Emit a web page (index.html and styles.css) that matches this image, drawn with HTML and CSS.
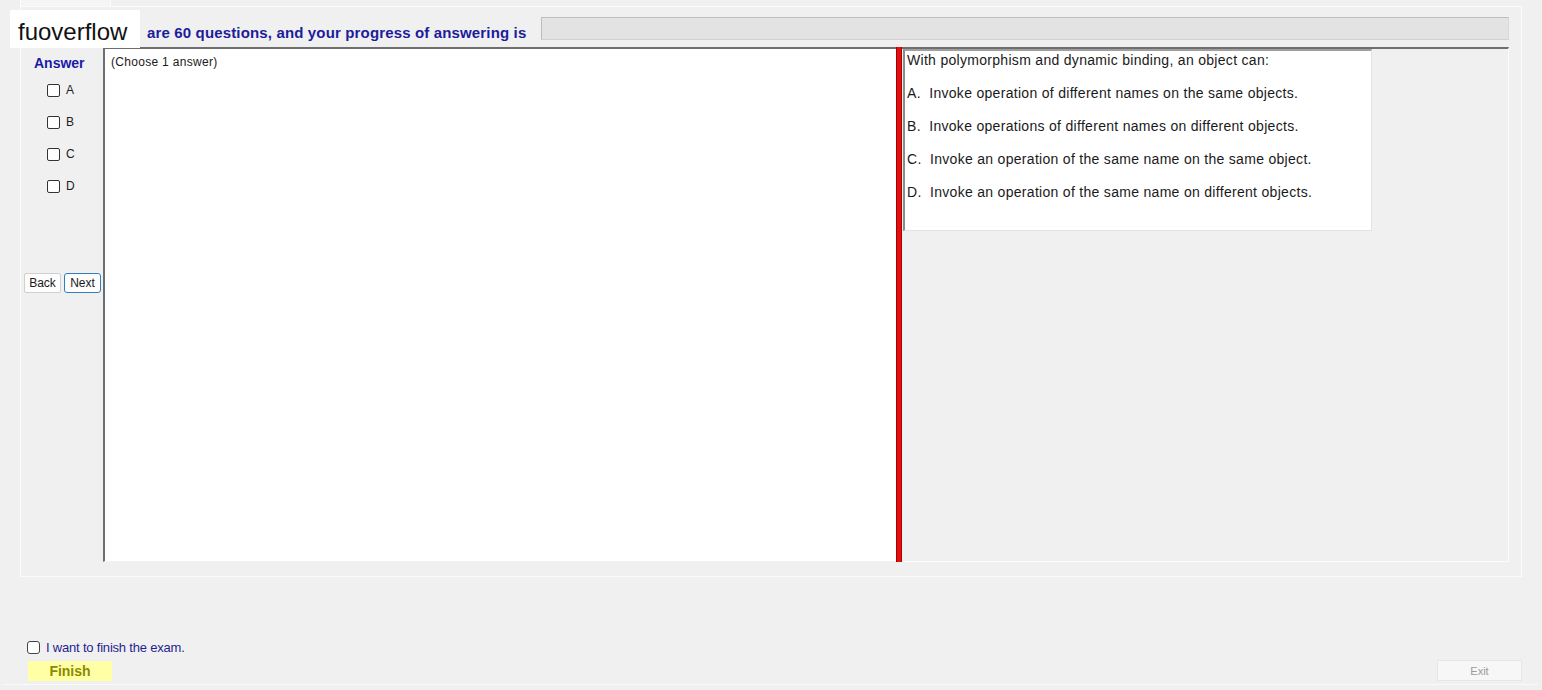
FILE: index.html
```html
<!DOCTYPE html>
<html lang="en">
<head>
  <meta charset="UTF-8" />
  <title>Exam</title>
  <link rel="stylesheet" href="styles.css">
</head>
<body>
<div class="window">
  <div class="tab"></div>

  <div class="panel">
    <div class="header">
      <span class="header-text">are 60 questions, and your progress of answering is</span>
      <div class="progress"></div>
    </div>

    <div class="main">
      <div class="answer-col">
        <div class="answer-title">Answer</div>
        <div class="opt"><span class="box"></span>A</div>
        <div class="opt"><span class="box"></span>B</div>
        <div class="opt"><span class="box"></span>C</div>
        <div class="opt"><span class="box"></span>D</div>
        <div class="nav">
          <button class="btn">Back</button>
          <button class="btn btn-next">Next</button>
        </div>
      </div>

      <div class="question-box">(Choose 1 answer)</div>
      <div class="splitter"></div>

      <div class="right-pane">
        <div class="content-box">
          <p>With polymorphism and dynamic binding, an object can:</p>
          <p>A.&nbsp; Invoke operation of different names on the same objects.</p>
          <p>B.&nbsp; Invoke operations of different names on different objects.</p>
          <p>C.&nbsp; Invoke an operation of the same name on the same object.</p>
          <p>D.&nbsp; Invoke an operation of the same name on different objects.</p>
        </div>
      </div>
    </div>
  </div>

  <div class="footer">
    <div class="footer-left">
      <div class="finish-check"><span class="box box-lg"></span>I want to finish the exam.</div>
      <button class="finish">Finish</button>
    </div>
    <button class="exit">Exit</button>
  </div>

  <div class="watermark">fuoverflow</div>
</div>
</body>
</html>
```

FILE: styles.css
```css
body {
  margin: 0;
  background: #f0f0f0;
  font-family: "Liberation Sans", Arial, sans-serif;
  color: #1a1a1a;
}
.window {
  position: relative;
  width: 1535px;
  height: 684px;
  margin-left: 3px;
  border-bottom: 1px solid #fafafa;
}
.tab {
  width: 89px;
  height: 6px;
  margin-left: 17px;
  background: #f5f5f5;
  border-left: 1px solid #fdfdfd;
  border-right: 1px solid #fdfdfd;
}
.panel {
  box-sizing: border-box;
  width: 1502px;
  margin-left: 17px;
  padding: 10px 12px 14px 0;
  border: 1px solid #fbfbfb;
  background: #f0f0f0;
}
.header {
  display: flex;
  align-items: center;
  height: 23px;
  padding-left: 126px;
}
.header-text {
  flex: 1;
  padding-top: 7px;
  font-weight: bold;
  font-size: 15px;
  letter-spacing: 0.15px;
  color: #1c1c9c;
}
.progress {
  box-sizing: border-box;
  width: 968px;
  height: 23px;
  background: #e3e3e3;
  border: 1px solid #bdbdbd;
  border-right-color: #d8d8d8;
  border-bottom-color: #d0d0d0;
}
.main {
  display: flex;
  height: 515px;
  margin-top: 7px;
}
.answer-col {
  width: 82px;
  padding-top: 7px;
}
.answer-title {
  font-weight: bold;
  font-size: 14px;
  line-height: 18px;
  color: #1a1aa8;
  padding-left: 13px;
  margin-bottom: 2px;
}
.opt {
  display: flex;
  align-items: center;
  height: 32px;
  padding-left: 26px;
  font-size: 12px;
  color: #222;
}
.box {
  box-sizing: border-box;
  width: 13px;
  height: 13px;
  margin-right: 6px;
  border: 1px solid #333;
  border-radius: 2px;
  background: #fff;
}
.nav {
  display: flex;
  gap: 3px;
  margin-top: 71px;
  padding-left: 3px;
}
.btn {
  box-sizing: border-box;
  width: 37px;
  height: 20px;
  padding: 0;
  font-family: "Liberation Sans", Arial, sans-serif;
  font-size: 12px;
  color: #1a1a1a;
  background: #fdfdfd;
  border: 1px solid #cfcfcf;
  border-radius: 2px;
}
.btn-next {
  border-color: #2f7fc0;
  border-radius: 3px;
}
.question-box {
  box-sizing: border-box;
  width: 793px;
  padding: 6px 0 0 6px;
  background: #fff;
  border-left: 2px solid #6e6e6e;
  border-top: 2px solid #6e6e6e;
  border-bottom: 1px solid #f2f2f2;
  font-size: 12px;
  line-height: 14px;
  letter-spacing: 0.3px;
}
.splitter {
  box-sizing: border-box;
  width: 6px;
  background: #e01010;
  border-left: 1px solid #a80000;
  border-right: 1px solid #b00000;
}
.right-pane {
  box-sizing: border-box;
  width: 607px;
  padding-left: 1px;
  border-top: 2px solid #6e6e6e;
  border-right: 1px solid #fcfcfc;
  border-bottom: 1px solid #fcfcfc;
}
.content-box {
  box-sizing: border-box;
  width: 469px;
  height: 182px;
  padding: 1px 0 0 2px;
  background: #fff;
  border-left: 2px solid #8c8c8c;
  border-top: 2px solid #a0a0a0;
  border-right: 1px solid #e4e4e4;
  border-bottom: 1px solid #e4e4e4;
}
.content-box p {
  margin: 0 0 16px;
  font-size: 14px;
  line-height: 17px;
  letter-spacing: 0.3px;
}
.footer {
  display: flex;
  justify-content: space-between;
  align-items: flex-end;
  margin-top: 62px;
  padding: 0 16px 0 24px;
}
.finish-check {
  display: flex;
  align-items: center;
  height: 16px;
  font-size: 13px;
  color: #1f1f8f;
  letter-spacing: -0.2px;
}
.box-lg {
  margin-right: 6px;
  border-color: #444;
  border-radius: 3px;
}
.finish {
  display: block;
  width: 84px;
  height: 20px;
  margin: 6px 0 0 1px;
  padding: 0;
  border: none;
  background: #ffffa6;
  font-family: "Liberation Sans", Arial, sans-serif;
  font-weight: bold;
  font-size: 14px;
  color: #8a8a00;
}
.exit {
  box-sizing: border-box;
  width: 85px;
  height: 21px;
  padding: 0;
  background: #f7f7f7;
  border: 1px solid #e6e6e6;
  font-family: "Liberation Sans", Arial, sans-serif;
  font-size: 11px;
  color: #9a9a9a;
}
.watermark {
  position: absolute;
  left: 7px;
  top: 10px;
  width: 130px;
  height: 38px;
  padding-left: 8px;
  box-sizing: border-box;
  background: #fff;
  font-size: 24px;
  line-height: 43px;
  color: #111;
}
```
